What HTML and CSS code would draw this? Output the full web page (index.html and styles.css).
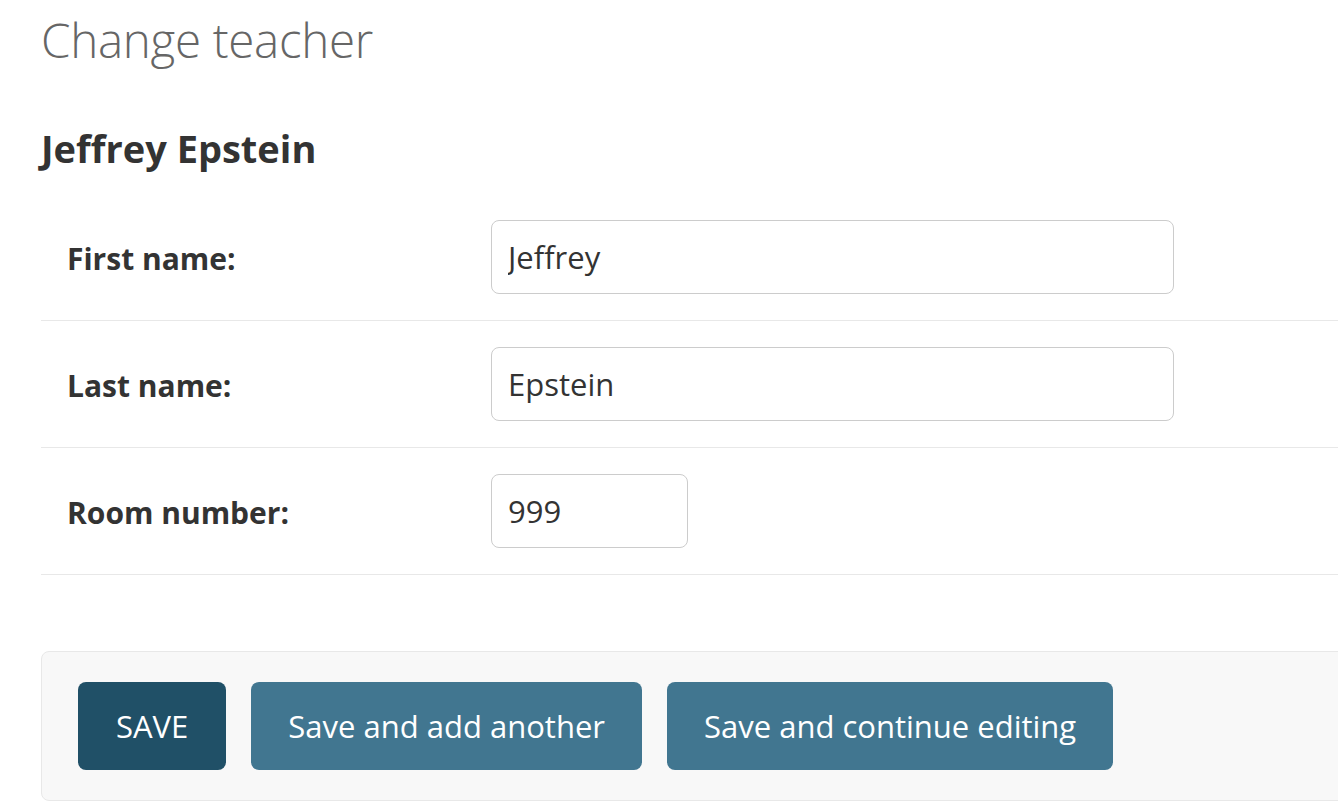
FILE: index.html
```html
<!DOCTYPE html>
<html lang="en">
<head>
<meta charset="utf-8">
<title>Change teacher</title>
<link rel="stylesheet" href="styles.css">
</head>
<body>
<div class="page">
  <h1 class="title">Change teacher</h1>
  <h2 class="subtitle">Jeffrey Epstein</h2>
  <form class="form">
    <fieldset class="fieldset">
      <div class="form-row">
        <label class="label" for="id_first_name">First name:</label>
        <input class="input input-wide" id="id_first_name" type="text" value="Jeffrey">
      </div>
      <div class="form-row">
        <label class="label" for="id_last_name">Last name:</label>
        <input class="input input-wide" id="id_last_name" type="text" value="Epstein">
      </div>
      <div class="form-row">
        <label class="label" for="id_room">Room number:</label>
        <input class="input input-narrow" id="id_room" type="text" value="999">
      </div>
    </fieldset>
    <div class="submit-row">
      <button type="button" class="btn btn-default">SAVE</button>
      <button type="button" class="btn">Save and add another</button>
      <button type="button" class="btn">Save and continue editing</button>
    </div>
  </form>
</div>
</body>
</html>
```
FILE: styles.css
```css
html, body {
  margin: 0;
  padding: 0;
  background: #ffffff;
}
body {
  font-family: "Open Sans", "Noto Sans", sans-serif;
  color: #333333;
  overflow: hidden;
}
.page {
  padding: 11px 0 0 41px;
}
.title {
  margin: 0;
  font-size: 47.5px;
  line-height: 58px;
  font-weight: 300;
  color: #666666;
  letter-spacing: -0.3px;
}
.subtitle {
  margin: 56px 0 0 0;
  font-size: 38px;
  line-height: 46px;
  font-weight: 700;
  color: #333333;
}
.form {
  margin: 23px 0 0 0;
}
.fieldset {
  margin: 0;
  padding: 0;
  border: 0;
  min-width: 0;
}
.form-row {
  display: flex;
  align-items: center;
  padding: 26px 0 26px 26px;
  border-bottom: 1px solid #e8e8e8;
}
.label {
  width: 424px;
  flex: none;
  font-size: 30px;
  font-weight: 700;
  color: #333333;
  padding-top: 2px;
}
.input {
  box-sizing: border-box;
  height: 74px;
  border: 1px solid #cccccc;
  border-radius: 8px;
  padding: 0 16px;
  font-family: "Open Sans", "Noto Sans", sans-serif;
  font-size: 31px;
  color: #333333;
  background: #ffffff;
  outline: none;
}
.input-wide {
  width: 683px;
}
.input-narrow {
  width: 197px;
}
.submit-row {
  margin: 76px -20px 0 0;
  display: flex;
  gap: 25px;
  padding: 30px 36px;
  background: #f8f8f8;
  border: 1px solid #e8e8e8;
  border-radius: 8px;
}
.btn {
  height: 88px;
  padding: 0 37px;
  border: 0;
  border-radius: 8px;
  background: #417690;
  color: #ffffff;
  font-family: "Open Sans", "Noto Sans", sans-serif;
  font-size: 31px;
  cursor: pointer;
}
.btn-default {
  background: #205067;
  padding: 0 38px;
}
```
